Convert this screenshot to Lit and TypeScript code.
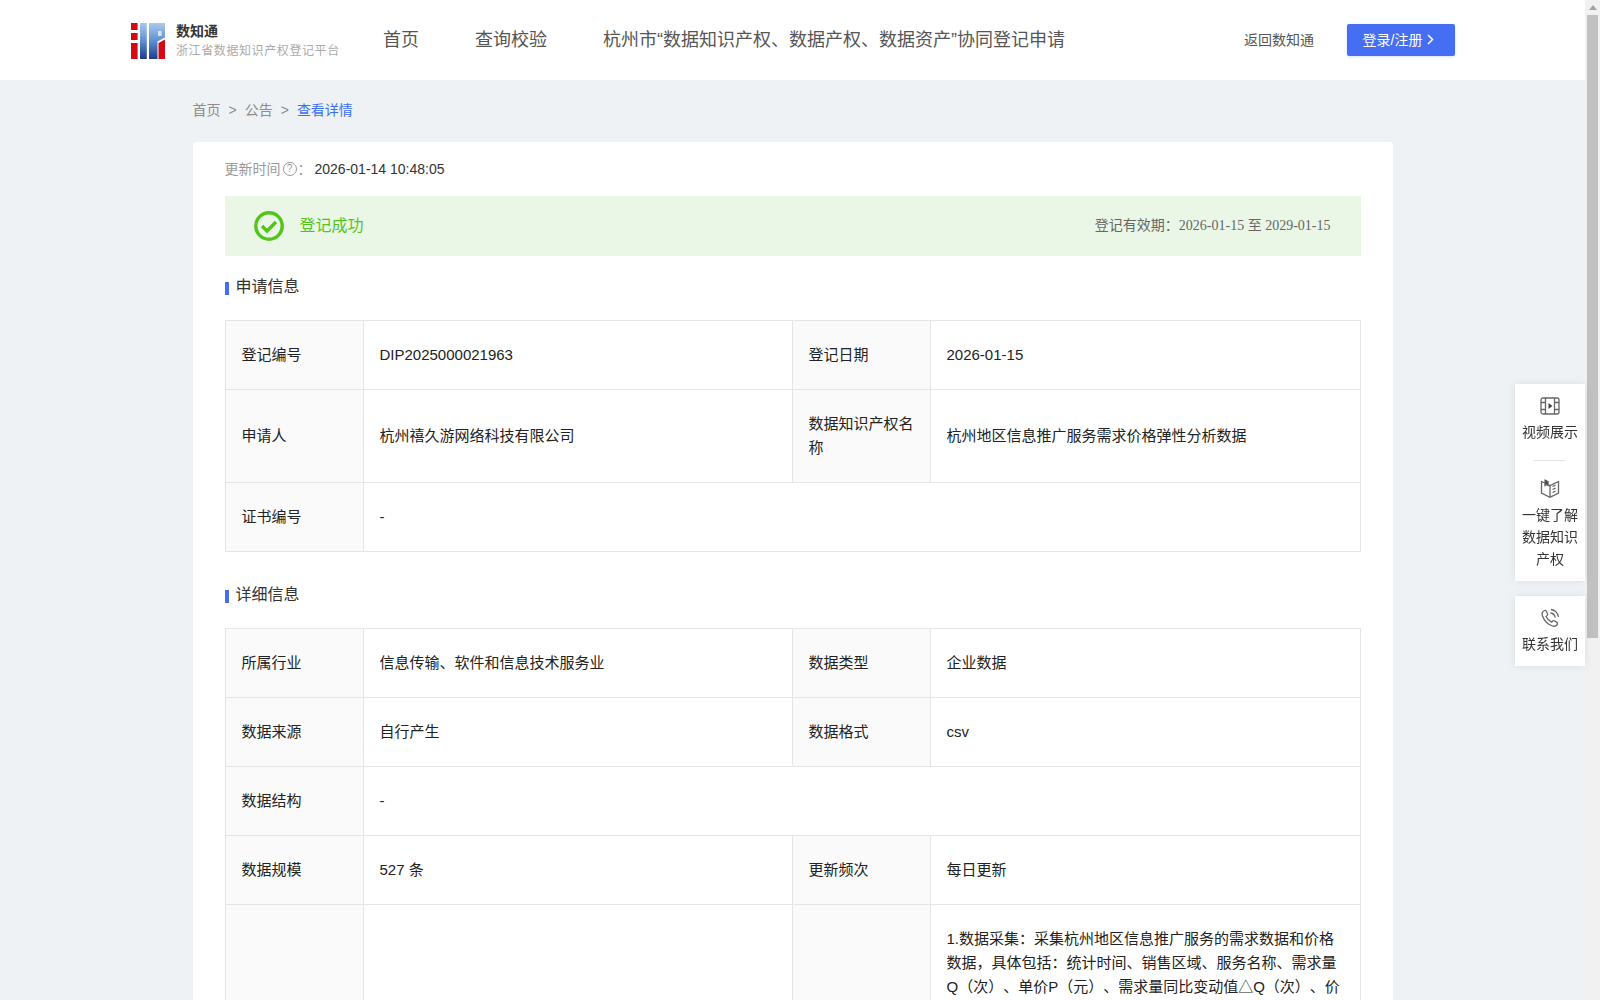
import { LitElement, html, css, svg } from 'lit';
import { customElement } from 'lit/decorators.js';

const logo = svg`
  <defs>
    <linearGradient id="lg" x1="0" y1="0" x2="0" y2="1">
      <stop offset="0" stop-color="#a9c9ec" />
      <stop offset="0.5" stop-color="#5f8fd0" />
      <stop offset="1" stop-color="#1f3b8c" />
    </linearGradient>
  </defs>
  <rect x="0" y="0" width="6.6" height="7" fill="#d40a12" />
  <rect x="0" y="10" width="6.6" height="7" fill="#d40a12" />
  <rect x="0" y="20" width="6.6" height="16" fill="#d40a12" />
  <rect x="9" y="0" width="6.8" height="36" fill="url(#lg)" />
  <path d="M18 0H34V14.500L26.500 18.500V36H18Z" fill="url(#lg)" />
  <rect x="27" y="8" width="3.500" height="5" fill="#d6e6f6" />
  <path d="M27.500 20L34 16.500V36H27.500Z" fill="#d40a12" />
`;

const videoIcon = svg`
  <rect x="1" y="2" width="18" height="16" rx="2" />
  <path d="M5.500 2V18M14.500 2V18M1 6.500H5.500M1 13.500H5.500M14.500 6.500H19M14.500 13.500H19" />
  <path d="M8.500 7L12.500 10L8.500 13Z" fill="#444" stroke="none" />
`;

const bookIcon = svg`
  <path d="M1.500 3.500L10 7.500L18.500 3.500V15L10 19.300L1.500 15Z" />
  <path d="M10 7.500V19" />
  <path d="M5 1.500V7.500L6.500 6.500L8 7.500V3" fill="#444" />
  <path d="M12.500 8.500L15.500 7.200M12.500 11.500L15.500 10.200M12.500 14.500L15.500 13.200" />
`;

const phoneIcon = svg`
  <path d="M4.500 2.500C2.500 3.500 1.500 5.500 2.500 8C4 12 8 16.500 12.500 18C15 18.800 17 17.500 17.500 15.800C17.700 15 17.200 14.500 16.500 14.100L14.200 12.800C13.500 12.400 13 12.600 12.500 13.200L11.600 14.200C9.500 13.200 7 10.500 6 8.500L7.200 7.400C7.800 6.800 7.800 6.200 7.400 5.500L6.200 3C5.800 2.300 5.200 2.200 4.500 2.500Z" />
  <path d="M10.500 5C13 5.300 14.800 7 15.200 9.500M11 1.500C14.800 1.900 18 5 18.500 9" />
`;

@customElement('app-root')
export class AppRoot extends LitElement {
  static styles = css`
    :host {
      display: block;
      height: 100vh;
      overflow: hidden;
      font-family: "Liberation Sans", "Noto Sans CJK SC", sans-serif;
      font-size: 14px;
      color: #333;
      text-spacing-trim: space-all;
    }
    .app {
      display: flex;
      height: 100%;
    }
    .page {
      flex: 1;
      min-width: 0;
      height: 100%;
      overflow: hidden;
      background: #eff2f5;
    }
    .rail {
      flex: none;
      width: 15px;
      background: #f1f1f1;
    }
    .rail-up {
      height: 15px;
      display: flex;
      align-items: center;
      justify-content: center;
    }
    .rail-up i {
      width: 0;
      height: 0;
      margin-top: -1px;
      border: 4px solid transparent;
      border-top: 0;
      border-bottom: 5px solid #a3a3a3;
    }
    .rail-thumb {
      width: 11px;
      height: 623px;
      margin-left: 2px;
      background: #c1c1c1;
    }

    .header {
      height: 80px;
      background: #fff;
      display: flex;
      align-items: center;
      padding: 0 130px 0 131px;
    }
    .logo {
      display: block;
      width: 34px;
      height: 36px;
      margin-right: 11px;
      margin-top: 1px;
    }
    .brand {
      width: 207px;
    }
    .brand-name {
      font-size: 14px;
      font-weight: 700;
      line-height: 20px;
      color: #333;
    }
    .brand-sub {
      font-size: 12px;
      letter-spacing: 0.6px;
      line-height: 18px;
      margin-top: 1px;
      color: #aaa;
      white-space: nowrap;
    }
    .nav {
      flex: 1;
      display: flex;
      gap: 56px;
      padding-bottom: 4px;
      font-size: 18px;
      color: #555;
      white-space: nowrap;
    }
    .back {
      color: #555;
      margin-right: 33px;
      padding-bottom: 2px;
    }
    .login {
      width: 108px;
      height: 32px;
      box-sizing: border-box;
      padding-right: 5px;
      display: flex;
      align-items: center;
      justify-content: center;
      gap: 5px;
      color: #fff;
      background: #456ef3;
      border-radius: 2px;
      box-shadow: 0 1px 3px rgba(69, 110, 243, 0.2);
    }
    .login span {
      padding-bottom: 3px;
    }
    .login svg {
      width: 7px;
      height: 11px;
      margin-bottom: 2px;
      fill: none;
      stroke: #fff;
      stroke-width: 1.5;
    }

    .main {
      width: 1200px;
      margin: 0 auto;
    }
    .crumbs {
      display: flex;
      gap: 8px;
      padding: 19px 0 21px;
      line-height: 22px;
      color: #8c8c8c;
    }
    .crumbs .now {
      color: #3b6ff5;
    }
    .card {
      background: #fff;
      border-radius: 4px;
      padding: 16px 32px 40px;
    }
    .updated {
      display: flex;
      align-items: center;
      line-height: 22px;
      color: #999;
    }
    .help {
      width: 12px;
      height: 12px;
      margin: 0 1px 0 2px;
      border: 1px solid #999;
      border-radius: 50%;
      font-size: 10px;
      line-height: 12px;
      text-align: center;
    }
    .updated b {
      font-weight: 400;
      color: #333;
      margin-left: 3px;
    }
    .banner {
      height: 60px;
      margin-top: 16px;
      padding: 0 30px 0 29px;
      background: #eaf7e6;
      display: flex;
      align-items: center;
      justify-content: space-between;
    }
    .status {
      display: flex;
      align-items: center;
      gap: 16px;
      font-size: 16px;
      color: #52c41a;
    }
    .status span {
      padding-bottom: 4px;
    }
    .status svg {
      display: block;
      width: 30px;
      height: 30px;
    }
    .period {
      padding-bottom: 4px;
      color: #666;
      font-family: "Liberation Serif", "Noto Sans CJK SC", serif;
    }
    .section {
      display: flex;
      align-items: center;
      gap: 7px;
      margin: 19px 0 21px;
      font-size: 16px;
      line-height: 24px;
    }
    .section::before {
      content: "";
      width: 4px;
      height: 13px;
      margin-top: 3px;
      background: #456ef3;
    }
    .section.second {
      margin-top: 31px;
    }
    table {
      width: 1136px;
      table-layout: fixed;
      border-collapse: collapse;
      font-size: 15px;
      color: #222;
    }
    th,
    td {
      padding: 22px 16px;
      border: 1px solid #e5e5e5;
      line-height: 24px;
      font-weight: 400;
      text-align: left;
    }
    th {
      background: #fafafa;
    }
    .tall td,
    .tall th {
      height: 260px;
      vertical-align: top;
    }

    .side {
      position: fixed;
      top: 384px;
      right: 15px;
      width: 70px;
      display: flex;
      flex-direction: column;
      gap: 15px;
      color: #333;
    }
    .side-card {
      background: #fff;
      box-shadow: 0 0 8px rgba(60, 80, 110, 0.12);
    }
    .side-item {
      padding: 12px 7px 11px;
      text-align: center;
      line-height: 22px;
    }
    .side-item.first {
      padding-bottom: 17px;
    }
    .side-item.next {
      padding-top: 17px;
    }
    .side-item svg {
      display: block;
      width: 20px;
      height: 20px;
      margin: 0 auto 5px;
      fill: none;
      stroke: #666;
      stroke-width: 1.3;
    }
    .side-item.next svg {
      margin-bottom: 6px;
    }
    .side-line {
      width: 32px;
      height: 1px;
      margin: 0 auto;
      background: #e3e3e3;
    }
  `;

  render() {
    return html`
      <div class="app">
        <div class="page">
          <header class="header">
            <svg class="logo" viewBox="0 0 34 36">${logo}</svg>
            <div class="brand">
              <div class="brand-name">数知通</div>
              <div class="brand-sub">浙江省数据知识产权登记平台</div>
            </div>
            <nav class="nav">
              <span>首页</span>
              <span>查询校验</span>
              <span>杭州市“数据知识产权、数据产权、数据资产”协同登记申请</span>
            </nav>
            <span class="back">返回数知通</span>
            <div class="login">
              <span>登录/注册</span>
              <svg viewBox="0 0 7 11"><path d="M1 1L5.500 5.500L1 10" /></svg>
            </div>
          </header>

          <div class="main">
            <div class="crumbs">
              <span>首页</span><span>&gt;</span><span>公告</span><span>&gt;</span>
              <span class="now">查看详情</span>
            </div>
            <div class="card">
              <div class="updated">
                更新时间<span class="help">?</span>：<b>2026-01-14 10:48:05</b>
              </div>
              <div class="banner">
                <div class="status">
                  <svg viewBox="0 0 30 30" fill="none" stroke="#52c41a">
                    <circle cx="15" cy="15" r="13.200" stroke-width="3.400" />
                    <path d="M8 15L13 20L22 11" stroke-width="3.400" />
                  </svg>
                  <span>登记成功</span>
                </div>
                <div class="period">登记有效期：2026-01-15 至 2029-01-15</div>
              </div>

              <div class="section">申请信息</div>
              <table>
                <colgroup>
                  <col style="width:138px" /><col style="width:429px" />
                  <col style="width:138px" /><col />
                </colgroup>
                <tr>
                  <th>登记编号</th><td>DIP2025000021963</td>
                  <th>登记日期</th><td>2026-01-15</td>
                </tr>
                <tr>
                  <th>申请人</th><td>杭州禧久游网络科技有限公司</td>
                  <th>数据知识产权名称</th><td>杭州地区信息推广服务需求价格弹性分析数据</td>
                </tr>
                <tr>
                  <th>证书编号</th><td colspan="3">-</td>
                </tr>
              </table>

              <div class="section second">详细信息</div>
              <table>
                <colgroup>
                  <col style="width:138px" /><col style="width:429px" />
                  <col style="width:138px" /><col />
                </colgroup>
                <tr>
                  <th>所属行业</th><td>信息传输、软件和信息技术服务业</td>
                  <th>数据类型</th><td>企业数据</td>
                </tr>
                <tr>
                  <th>数据来源</th><td>自行产生</td>
                  <th>数据格式</th><td>csv</td>
                </tr>
                <tr>
                  <th>数据结构</th><td colspan="3">-</td>
                </tr>
                <tr>
                  <th>数据规模</th><td>527 条</td>
                  <th>更新频次</th><td>每日更新</td>
                </tr>
                <tr class="tall">
                  <th></th><td></td>
                  <th></th>
                  <td>1.数据采集：采集杭州地区信息推广服务的需求数据和价格数据，具体包括：统计时间、销售区域、服务名称、需求量Q（次）、单价P（元）、需求量同比变动值△Q（次）、价</td>
                </tr>
              </table>
            </div>
          </div>
        </div>

        <div class="rail">
          <div class="rail-up"><i></i></div>
          <div class="rail-thumb"></div>
        </div>

        <aside class="side">
          <div class="side-card">
            <div class="side-item first">
              <svg viewBox="0 0 20 20">${videoIcon}</svg>
              视频展示
            </div>
            <div class="side-line"></div>
            <div class="side-item next">
              <svg viewBox="0 0 20 20">${bookIcon}</svg>
              一键了解数据知识产权
            </div>
          </div>
          <div class="side-card">
            <div class="side-item">
              <svg viewBox="0 0 20 20">${phoneIcon}</svg>
              联系我们
            </div>
          </div>
        </aside>
      </div>
    `;
  }
}
